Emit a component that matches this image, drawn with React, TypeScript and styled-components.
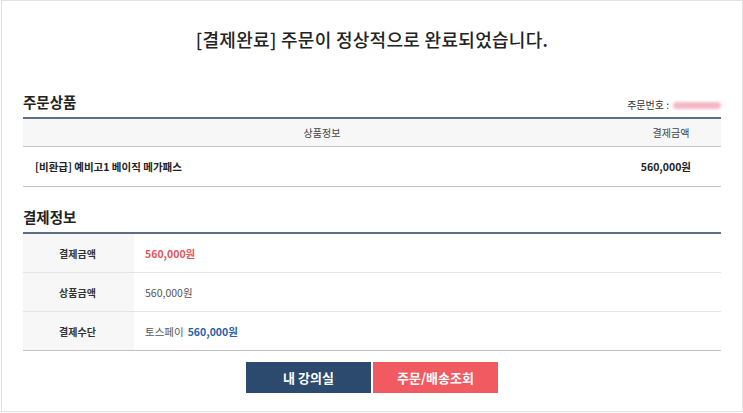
import React from 'react';
import styled, { createGlobalStyle } from 'styled-components';

const GlobalStyle = createGlobalStyle`
  html, body {
    margin: 0;
    padding: 0;
    background: #fff;
  }
  body {
    font-family: "Noto Sans CJK KR", "Noto Sans", sans-serif;
    color: #333;
  }
`;

const Frame = styled.div`
  box-sizing: border-box;
  width: 742px;
  height: 412px;
  margin-left: 1px;
  border: 1px solid #e3e3e3;
  padding: 0 21px;
  display: flex;
  flex-direction: column;
`;

const Title = styled.h1`
  margin: 24px 0 0;
  height: 28px;
  line-height: 28px;
  text-align: center;
  font-size: 18px;
  font-weight: 500;
  color: #222;
  letter-spacing: 0.3px;
`;

const SectionHead = styled.div<{ $top: number }>`
  display: flex;
  align-items: flex-end;
  justify-content: space-between;
  margin-top: ${(p) => p.$top}px;
  height: 22px;
  padding-bottom: 5px;
`;

const SectionTitle = styled.h2`
  margin: 0;
  font-size: 14.5px;
  font-weight: 700;
  color: #222;
  line-height: 20px;
`;

const OrderNo = styled.div`
  display: flex;
  align-items: center;
  gap: 4px;
  font-size: 10px;
  color: #333;
  line-height: 14px;
`;

const Blur = styled.span`
  display: inline-block;
  width: 48px;
  height: 7px;
  background: #f3b7c4;
  border-radius: 4px;
  filter: blur(1.5px);
`;

const Table = styled.div`
  border-top: 2px solid #5b6f82;
  border-bottom: 1px solid #bfc3c7;
`;

const HeadRow = styled.div`
  display: grid;
  grid-template-columns: 1fr 100px;
  height: 27px;
  align-items: center;
  background: #f7f7f7;
  border-bottom: 1px solid #c4c7ca;
  font-size: 10px;
  color: #444;
`;

const ItemRow = styled.div`
  display: grid;
  grid-template-columns: 1fr 100px;
  height: 39px;
  align-items: center;
  font-size: 10.5px;
  font-weight: 700;
  color: #222;
`;

const Cell = styled.div<{ $align?: 'left' | 'center' | 'right' }>`
  text-align: ${(p) => p.$align || 'left'};
  padding: 0 ${(p) => (p.$align === 'left' ? '12px' : '0')};
  padding-right: ${(p) => (p.$align === 'right' ? '30px' : undefined)};
`;

const InfoRow = styled.div<{ $last?: boolean }>`
  display: grid;
  grid-template-columns: 111px 1fr;
  height: 38px;
  border-bottom: ${(p) => (p.$last ? 'none' : '1px solid #e4e4e4')};
`;

const Label = styled.div`
  background: #f7f7f7;
  display: flex;
  align-items: center;
  justify-content: center;
  font-size: 10px;
  font-weight: 700;
  color: #333;
  padding-right: 2px;
`;

const Value = styled.div`
  display: flex;
  align-items: center;
  gap: 4px;
  padding-left: 11px;
  font-size: 10.5px;
  color: #555;
`;

const Amount = styled.span<{ $tone: 'red' | 'blue' | 'plain' }>`
  font-weight: ${(p) => (p.$tone === 'plain' ? 400 : 700)};
  color: ${(p) =>
    p.$tone === 'red' ? '#e0555c' : p.$tone === 'blue' ? '#2b5ea8' : '#555'};
`;

const Buttons = styled.div`
  display: flex;
  justify-content: center;
  gap: 2px;
  margin-top: 11px;
`;

const Button = styled.button<{ $variant: 'navy' | 'coral' }>`
  display: block;
  width: 125px;
  height: 31px;
  border: none;
  margin: 0;
  padding: 0;
  font-family: inherit;
  font-size: 13px;
  font-weight: 700;
  color: #fff;
  cursor: pointer;
  background: ${(p) => (p.$variant === 'navy' ? '#2c4a6e' : '#f05a60')};
`;

export default function App() {
  return (
    <>
      <GlobalStyle />
      <Frame>
        <Title>[결제완료] 주문이 정상적으로 완료되었습니다.</Title>

        <SectionHead $top={37}>
          <SectionTitle>주문상품</SectionTitle>
          <OrderNo>
            주문번호 : <Blur />
          </OrderNo>
        </SectionHead>
        <Table>
          <HeadRow>
            <Cell $align="center">상품정보</Cell>
            <Cell $align="center">결제금액</Cell>
          </HeadRow>
          <ItemRow>
            <Cell $align="left">[비환급] 예비고1 베이직 메가패스</Cell>
            <Cell $align="right">560,000원</Cell>
          </ItemRow>
        </Table>

        <SectionHead $top={18}>
          <SectionTitle>결제정보</SectionTitle>
        </SectionHead>
        <Table>
          <InfoRow>
            <Label>결제금액</Label>
            <Value>
              <Amount $tone="red">560,000원</Amount>
            </Value>
          </InfoRow>
          <InfoRow>
            <Label>상품금액</Label>
            <Value>
              <Amount $tone="plain">560,000원</Amount>
            </Value>
          </InfoRow>
          <InfoRow $last>
            <Label>결제수단</Label>
            <Value>
              토스페이 <Amount $tone="blue">560,000원</Amount>
            </Value>
          </InfoRow>
        </Table>

        <Buttons>
          <Button $variant="navy">내 강의실</Button>
          <Button $variant="coral">주문/배송조회</Button>
        </Buttons>
      </Frame>
    </>
  );
}
